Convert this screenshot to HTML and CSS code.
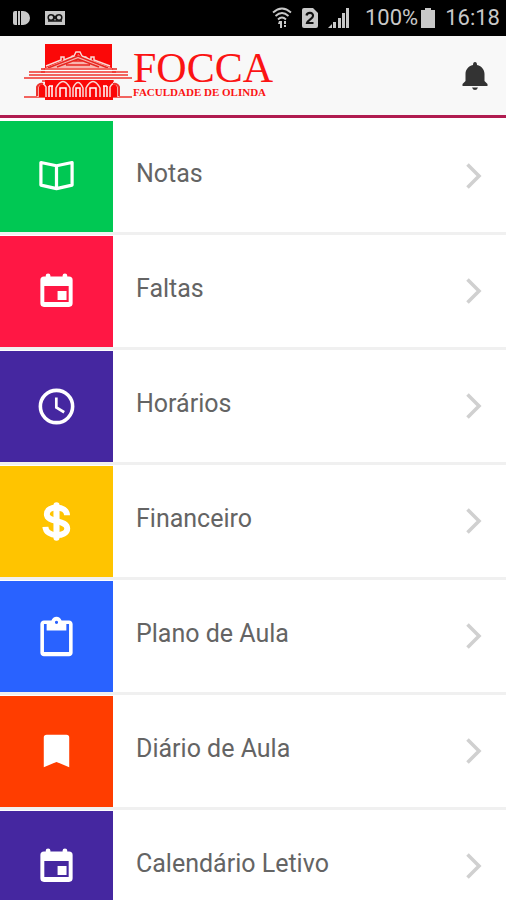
FILE: index.html
```html
<!DOCTYPE html>
<html lang="pt-BR">
<head>
<meta charset="utf-8">
<meta name="viewport" content="width=device-width, initial-scale=1">
<title>FOCCA</title>
<link rel="stylesheet" href="styles.css">
</head>
<body>
<div class="status">
  <div class="status-group status-left">
    <svg width="17" height="14" viewBox="0 0 17 14" aria-hidden="true"><path d="M2 0h2v14H2Q0 14 0 12V2Q0 0 2 0zM5 0h2v14H5zM8 0h2a7 7 0 0 1 0 14H8z"/></svg>
    <svg width="20" height="14" viewBox="0 0 20 14" aria-hidden="true"><path d="M0 0h20v14H0z"/><g fill="none" stroke="#161616" stroke-width="1.5"><circle cx="6" cy="6.5" r="2.8"/><circle cx="14" cy="6.5" r="2.8"/><path d="M3 10h14M8 4l4 5M12 4l-4 5"/></g></svg>
  </div>
  <div class="status-group status-right">
    <svg width="20" height="22" viewBox="0 0 20 22" aria-hidden="true"><g fill="none" stroke="#c8c8c8" stroke-width="1.8"><path d="M1 5.5Q10-2.500 19 5.500M3.500 9Q10 3 16.500 9M6 12.500Q10 8.500 14 12.500"/></g><path d="M7 14h3v7H8v-4H6zM12 14h2v3h-2zM12 18h2v2h-2z"/></svg>
    <svg width="16" height="20" viewBox="0 0 16 20" aria-hidden="true"><path d="M2 0h9l5 5v13q0 2-2 2H2q-2 0-2-2V2q0-2 2-2z"/><path d="M4.500 7.500C5 4 11.500 4 11 8c0 2.500-5.500 4-6 7h6.500" fill="none" stroke="#111" stroke-width="2.200"/></svg>
    <svg width="22" height="20" viewBox="0 0 22 20" aria-hidden="true"><path d="M0 20l4-4v4zM5 14h3v6H5zM10 10h3v10h-3zM14 5h3v15h-3zM18 0h3v20h-3z"/></svg>
    <span class="battery-level">100%</span>
    <svg width="14" height="20" viewBox="0 0 14 20" aria-hidden="true"><path d="M4 0h6v2h4v18H0V2h4z"/></svg>
    <span class="clock">16:18</span>
  </div>
</div>

<header class="header">
  <div class="brand">
    <svg class="brand-mark" width="108" height="56" viewBox="0 0 108 56" aria-hidden="true">
      <path fill="#fb0808" d="M21 0h67v24H21z"/>
      <path fill="#f8b4ae" d="M19 25L40 16l5-1 3-4 5 2 1-3 3 3 5-1 3 3 3 1 22 9z"/>
      <path fill="none" stroke="#f8dad5" stroke-width="1.500" d="M22 22l15-6v-3h3v3l10-4 2-4h4l2 4 9 4v-3h3v3l16 6"/>
      <path fill="none" stroke="#e72620" stroke-width="1.500" d="M24 24l30-12 30 12M33 23l21-8 21 8M42 21h24M50 17h8M17 25h76M17 28h75"/>
      <path fill="#fff" d="M21 24h67v5H21z"/>
      <path fill="none" stroke="#f0332d" stroke-width="1.500" d="M20 25h69M5 28h99M5 31h99M0 34h108M18 37h72M0 53h108"/>
      <path fill="#fb0808" d="M21 36h68v4l4 2v11H16V42l5-2zM21 53h68v3H21z"/>
      <g fill="#fb0808" stroke="#f8dad5" stroke-width="1.500">
        <path d="M14 53V43q4-7 8 0v10M32 53v-9q7-13 14 0v9M49 53v-9q5-11 10 0v9M62 53v-9q7-13 14 0v9M86 53V43q4-7 8 0v10"/>
      </g>
      <path fill="none" stroke="#fff" stroke-width="1.500" d="M25 53V42M28 53V42M36 53v-9h6v9M52 53v-9h4v9M66 53v-9h6v9M80 53V42M83 53V42M25 42h4M79 42h4"/>
      <path fill="none" stroke="#ed332e" stroke-width="2" d="M13 52V43q2-4 6-3M95 52V43q-2-4-6-3"/>
    </svg>
    <div class="brand-text">
      <div class="brand-name">FOCCA</div>
      <div class="brand-sub">FACULDADE DE OLINDA</div>
    </div>
  </div>
  <button class="bell" type="button" aria-label="Notificações">
    <svg width="26" height="30" viewBox="0 0 26 30" aria-hidden="true"><path d="M13 1q2 0 2 3c5 1 7.500 5 7.500 9v7l3 3v2H.500v-2l3-3v-7c0-4 2.500-8 7.500-9q0-3 2-3zM10 26.500h6q-1 2.500-3 2.500t-3-2.500z"/></svg>
  </button>
</header>

<svg class="defs" aria-hidden="true">
  <symbol id="calendar" viewBox="0 0 24 24"><path fill-rule="evenodd" d="M5 3.600h1V3q0-1 1.300-1T8.600 3v.6h6.800V3q0-1 1.300-1T18 3v.6h1q2 0 2 2v13q0 2-2 2H5q-2 0-2-2v-13q0-2 2-2zM5.200 8.900v9h13.600v-9zM12.600 11.700h5v5h-5z"/></symbol>
  <symbol id="chevron" viewBox="0 0 16 26"><path d="M1.500 1.500L13 13l-11.500 11.500" fill="none" stroke="#d0d0d0" stroke-width="3.600"/></symbol>
</svg>

<nav>
  <ul class="menu">
    <li><a class="item" href="#notas"><span class="tile green"><svg class="icon" viewBox="0 0 24 24" aria-hidden="true"><path fill="none" stroke="#fff" stroke-width="1.800" stroke-linejoin="round" d="M3.300 4.200L12 6l8.700-1.800v12.600L12 18.800l-8.700-2zM12 6v12.800"/></svg></span><span class="label">Notas</span><svg class="chevron" aria-hidden="true"><use href="#chevron"/></svg></a></li>
    <li><a class="item" href="#faltas"><span class="tile red"><svg class="icon" aria-hidden="true"><use href="#calendar"/></svg></span><span class="label">Faltas</span><svg class="chevron" aria-hidden="true"><use href="#chevron"/></svg></a></li>
    <li><a class="item" href="#horarios"><span class="tile purple"><svg class="icon" viewBox="0 0 24 24" aria-hidden="true"><path fill="none" stroke="#fff" stroke-width="2" d="M12 3a9 9 0 1 0 0 18 9 9 0 0 0 0-18z"/><path fill="none" stroke="#fff" stroke-width="1.500" d="M11.900 7v5.500l4.400 2.700"/></svg></span><span class="label">Horários</span><svg class="chevron" aria-hidden="true"><use href="#chevron"/></svg></a></li>
    <li><a class="item" href="#financeiro"><span class="tile yellow"><svg class="icon" viewBox="0 0 24 24" aria-hidden="true"><path fill="none" stroke="#fff" stroke-width="3.300" d="M17.900 8.500C17.700 2.800 6.600 2.800 6.600 7.900c0 5 11.400 2.800 11.400 8 0 5.200-12 5-12.200-.9"/><path fill="none" stroke="#fff" stroke-width="3.400" stroke-linecap="round" d="M12 3v18"/></svg></span><span class="label">Financeiro</span><svg class="chevron" aria-hidden="true"><use href="#chevron"/></svg></a></li>
    <li><a class="item" href="#plano"><span class="tile blue"><svg class="icon" viewBox="0 -1 24 24" aria-hidden="true"><path d="M19 2h-4.180C14.400.84 13.300 0 12 0S9.600.84 9.180 2H5c-1.100 0-2 .9-2 2v16c0 1.100.9 2 2 2h14c1.100 0 2-.9 2-2V4c0-1.100-.9-2-2-2zm-7 .2a.9.900 0 1 1 0 1.800.9.900 0 0 1 0-1.800zm7 17.500H5V4h1.500v3.600h11V4H19z"/></svg></span><span class="label">Plano de Aula</span><svg class="chevron" aria-hidden="true"><use href="#chevron"/></svg></a></li>
    <li><a class="item" href="#diario"><span class="tile orange"><svg class="icon" viewBox="0 0 24 24" aria-hidden="true"><path d="M6.500 2.600h11q1.600 0 1.600 1.600v16.600L12 17.800l-7.100 3V4.200q0-1.600 1.600-1.600z"/></svg></span><span class="label">Diário de Aula</span><svg class="chevron" aria-hidden="true"><use href="#chevron"/></svg></a></li>
    <li><a class="item" href="#calendario"><span class="tile purple"><svg class="icon" aria-hidden="true"><use href="#calendar"/></svg></span><span class="label">Calendário Letivo</span><svg class="chevron" aria-hidden="true"><use href="#chevron"/></svg></a></li>
  </ul>
</nav>
</body>
</html>
```
FILE: styles.css
```css
* {
  box-sizing: border-box;
}

body {
  margin: 0;
  height: 100vh;
  overflow: hidden;
  background: #fff;
  font-family: Roboto, "Liberation Sans", sans-serif;
}

.status {
  display: flex;
  justify-content: space-between;
  align-items: center;
  height: 36px;
  padding: 0 6px 0 13px;
  background: #000;
  color: #c8c8c8;
  fill: #c8c8c8;
  font-size: 22px;
  line-height: 36px;
}

.status-group {
  display: flex;
  align-items: center;
}

.status-left {
  gap: 15px;
}

.status-right {
  gap: 10px;
}

.battery-level {
  margin-left: 5px;
  margin-right: -7px;
}

.header {
  display: flex;
  justify-content: space-between;
  align-items: center;
  height: 82px;
  padding: 0 18px 0 24px;
  background: #f8f8f8;
  border-bottom: 3px solid #b01c50;
}

.brand {
  display: flex;
  align-items: flex-start;
  height: 64px;
}

.brand-text {
  padding: 6px 0 0 1px;
  color: #fb1414;
  font-family: "Liberation Serif", serif;
}

.brand-name {
  font-size: 42px;
  line-height: 37px;
}

.brand-sub {
  font-size: 11px;
  font-weight: bold;
  line-height: 10px;
  white-space: nowrap;
}

.bell {
  display: flex;
  padding: 0;
  border: 0;
  background: none;
  fill: #333;
}

.defs {
  position: absolute;
  width: 0;
  height: 0;
}

.menu {
  margin: 0;
  padding: 2px 0 0;
  list-style: none;
}

.item {
  display: flex;
  align-items: center;
  height: 115px;
  padding-right: 24px;
  border-bottom: 3px solid #f0f0f0;
  border-top: 1px solid #fff;
  color: #646464;
  text-decoration: none;
}

.tile {
  display: flex;
  align-items: center;
  justify-content: center;
  align-self: stretch;
  width: 113px;
  fill: #fff;
}

.green { background: #00c853; }
.red { background: #ff1744; }
.purple { background: #4527a0; }
.yellow { background: #ffc400; }
.blue { background: #2962ff; }
.orange { background: #ff3d00; }

.icon {
  width: 43px;
  height: 43px;
}

.label {
  flex: 1;
  padding: 0 0 5px 23px;
  font-size: 25px;
  line-height: 32px;
}

.chevron {
  width: 16px;
  height: 26px;
  margin-bottom: 2px;
}
```
